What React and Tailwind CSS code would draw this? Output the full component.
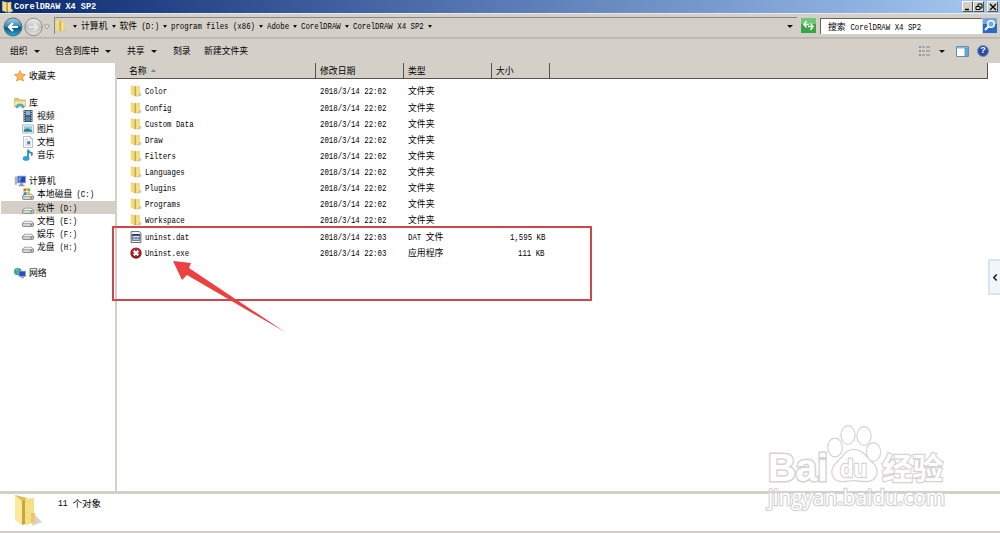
import { ChevronLeft } from 'lucide-react';

const CELL = 4.42;

const folders = ['Color', 'Config', 'Custom Data', 'Draw', 'Filters', 'Languages', 'Plugins', 'Programs', 'Workspace'];

const files = [
    ...folders.map((name) => ({ name, icon: 'folder', date: '2018/3/14 22:02', type: '文件夹', size: '' })),
    { name: 'uninst.dat', icon: 'dat', date: '2018/3/14 22:03', type: 'DAT 文件', size: '1,595 KB' },
    { name: 'Uninst.exe', icon: 'exe', date: '2018/3/14 22:03', type: '应用程序', size: '111 KB' },
];

const libraries = [
    { name: '视频', icon: 'video' },
    { name: '图片', icon: 'picture' },
    { name: '文档', icon: 'document' },
    { name: '音乐', icon: 'music' },
];

const drives = [
    { name: '本地磁盘 (C:)', icon: 'system' },
    { name: '软件 (D:)', icon: 'drive', active: true },
    { name: '文档 (E:)', icon: 'drive' },
    { name: '娱乐 (F:)', icon: 'drive' },
    { name: '龙盘 (H:)', icon: 'drive' },
];

const crumbs = ['计算机', '软件 (D:)', 'program files (x86)', 'Adobe', 'CorelDRAW', 'CorelDRAW X4 SP2'];

// latin runs sit on half-width cells, chinese glyphs on full-width ones
function Text({ children, cell = CELL }) {
    const runs = children.match(/[\x00-\x7f]+|[^\x00-\x7f]+/g) || [];
    return (
        <span className="flex h-[12px] items-center whitespace-pre leading-[12px]">
            {runs.map((run, i) =>
                run.charCodeAt(0) < 128 ? (
                    <span key={i} className="block h-[12px] leading-[14px]" style={{ width: run.length * cell }}>
                        <span
                            className="block w-max origin-left font-['Liberation_Mono',monospace] text-[9px]"
                            style={{ transform: `scaleX(${cell / 5.4})` }}
                        >
                            {run}
                        </span>
                    </span>
                ) : (
                    <span key={i} className="block h-[12px] font-['Noto_Sans_CJK_SC',sans-serif]" style={{ fontSize: cell * 2 }}>{run}</span>
                )
            )}
        </span>
    );
}

function Caret({ small }) {
    return (
        <svg className={small ? 'h-[3px] w-[4px]' : 'h-[3px] w-[6px]'} viewBox="0 0 6 3" preserveAspectRatio="none">
            <path d="M0 0h6L3 3z" fill="#111" />
        </svg>
    );
}

function Icon({ name, className = 'h-[12px] w-[12px]' }) {
    return (
        <svg className={`shrink-0 ${className}`} viewBox="0 0 16 16">
            {name === 'folder' && (
                <>
                    <path d="M11 10l4 1v3l-6 2z" fill="#ccc7b5" />
                    <path d="M1 0l6 2v13l-6-2z" fill="#f1dc80" />
                    <path d="M6 2l2-1v13l-2 2z" fill="#d0aa42" />
                    <path d="M8 2l5-1v12l-5 2z" fill="#ecd273" />
                    <path d="M9 3h2v10l-2 1z" fill="#f9eaa3" />
                </>
            )}
            {name === 'dat' && (
                <>
                    <path d="M1.5.8h11l2 2v12.5h-13z" fill="#fff" stroke="#5b6175" strokeWidth="1.3" />
                    <path d="M3 4.5h10v8H3z" fill="#dfe5f4" stroke="#303b62" />
                    <path d="M3 4h10v2.5H3z" fill="#303b62" />
                    <path d="M5 8v3m2-3v3m2-3v3m2-3v3" stroke="#303b62" />
                </>
            )}
            {name === 'exe' && (
                <>
                    <circle cx="8" cy="8" r="7.5" fill="#8c1921" />
                    <circle cx="8" cy="7" r="5.7" fill="#b52d36" />
                    <path d="M5 5l6 6m0-6l-6 6" stroke="#fff" strokeWidth="2.9" />
                </>
            )}
            {name === 'star' && (
                <path d="M8 .8l2.1 4.8 5.2.5-4 3.4 1.3 5.2L8 12l-4.6 2.7 1.3-5.2-4-3.4 5.2-.5z" fill="#fdbb4b" stroke="#d8893a" />
            )}
            {name === 'library' && (
                <>
                    <path d="M1 2h5l1 2h8v9H1z" fill="#e8ca68" stroke="#c5a353" />
                    <path d="M3 5h10v7H3z" fill="#b9dc8d" />
                    <path d="M1 6h14v5H1z" fill="#f8e9a4" />
                    <path d="M4 15v-1q0-4 4-4t4 4v1" fill="none" stroke="#58a7cf" strokeWidth="3" />
                </>
            )}
            {name === 'video' && (
                <>
                    <path d="M2 0h12v16H2z" fill="#424d5b" />
                    <path d="M5 1h6v6H5z" fill="#80b6dc" />
                    <path d="M5 9h6v6H5z" fill="#4b82b1" />
                    <path d="M3.5 1v14m9-14v14" stroke="#dce6ed" strokeWidth="1.2" strokeDasharray="1.5 1.5" />
                </>
            )}
            {name === 'picture' && (
                <>
                    <path d="M.7 2.5h14.6v11H.7z" fill="#f2f6f7" stroke="#9ba9ad" />
                    <path d="M2.5 4.5h11v7h-11z" fill="#8dcdea" />
                    <path d="M2.5 9l5-2 6 3v1.5h-11z" fill="#347e91" />
                </>
            )}
            {name === 'document' && (
                <>
                    <path d="M2 .7h9l3 3v11.6H2z" fill="#f8fafc" stroke="#a4adb5" />
                    <path d="M11 .7v3h3" fill="none" stroke="#a4adb5" />
                    <path d="M7 7h4v4H7z" fill="#437db5" />
                    <path d="M4 5h4M4 8h2m-2 4h8" stroke="#a9bed0" />
                </>
            )}
            {name === 'music' && (
                <>
                    <path d="M8 12V1q1 4 5 4 1 2-.5 4" fill="none" stroke="#238bce" strokeWidth="2.3" />
                    <ellipse cx="5.5" cy="12.5" rx="4.5" ry="3.3" fill="#349dda" />
                </>
            )}
            {name === 'computer' && (
                <>
                    <path d="M1 2h3v11H1z" fill="#a9b1c1" />
                    <path d="M4.5 1.5h11v9h-11z" fill="#2247c2" stroke="#a2adc5" />
                    <path d="M6 3h4l-2 6H6z" fill="#6f9df1" />
                    <path d="M8 11h4v2h2v2H6v-2h2z" fill="#9298a6" />
                </>
            )}
            {(name === 'drive' || name === 'system') && (
                <>
                    <path d="M0 11l3.5-3.5h9L16 11v3.5L14 16H2l-2-1.5z" fill="#8d918f" />
                    <path d="M1.5 10.5L4 8.5h8l2.5 2z" fill="#f0f1f0" />
                    <path d="M1.5 11.5h13v3h-13z" fill="#d8dad9" />
                    <path d="M11 13h2.5" stroke="#398746" strokeWidth="1.5" />
                </>
            )}
            {name === 'system' && (
                <>
                    <path d="M2 1l4-1v4L2 5z" fill="#dd6b3b" />
                    <path d="M7 0l4 1v4L7 4z" fill="#79b544" />
                    <path d="M2 6l4-1v4L2 10z" fill="#3e86c6" />
                    <path d="M7 5l4 1v4L7 9z" fill="#e3b53a" />
                </>
            )}
            {name === 'network' && (
                <>
                    <circle cx="5" cy="6" r="5" fill="#359bc8" />
                    <path d="M2 3q3-3 5-1L5 5 3 6zm1 5l4-2v4z" fill="#70c16c" />
                    <path d="M6.5 5.5h9v7h-9z" fill="#2550bd" stroke="#9aa7bf" />
                    <path d="M10 13h3v2H9z" fill="#8190a5" />
                </>
            )}
        </svg>
    );
}

function TitleBar() {
    return (
        <div className="flex h-[13px] shrink-0 items-center bg-linear-to-r from-[#0a2a70] via-[#5a79b5] to-[#a6c8f0]">
            <Icon name="folder" className="ml-px h-[12px] w-[13px]" />
            <div className="-mt-px font-bold text-white"><Text cell={5.14}>CorelDRAW X4 SP2</Text></div>
            <div className="mr-[2px] ml-auto flex">
                {['min', 'max', 'close'].map((button) => (
                    <button
                        key={button}
                        className={`flex h-[11px] w-[11px] items-center justify-center border border-t-white border-l-white border-r-[#555] border-b-[#555] bg-[#d4d0c8] ${button === 'close' ? 'ml-[3px]' : ''}`}
                    >
                        <svg className="h-[8px] w-[8px]" viewBox="0 0 8 8" fill="none" stroke="#000">
                            {button === 'min' && <path d="M1 6.5h4" strokeWidth="1.5" />}
                            {button === 'max' && <path d="M3 3V1h4v4H5M1 3.5h4v3H1z" />}
                            {button === 'close' && <path d="M1 1l6 6m0-6l-6 6" strokeWidth="1.3" />}
                        </svg>
                    </button>
                ))}
            </div>
        </div>
    );
}

function AddressBar() {
    return (
        <div className="flex h-[25px] shrink-0 items-center border-t border-b border-t-[#eceae6] border-b-[#b9b6b0] bg-[#d4d0c8]">
            <svg className="ml-[2px] h-[22px] w-[49px]" viewBox="0 0 49 22">
                <defs>
                    <linearGradient id="back" x2="0" y2="1">
                        <stop stopColor="#a7d2e4" />
                        <stop offset=".48" stopColor="#3684ae" />
                        <stop offset=".5" stopColor="#075080" />
                        <stop offset="1" stopColor="#26aeda" />
                    </linearGradient>
                    <linearGradient id="next" x2="0" y2="1">
                        <stop stopColor="#eeeeec" />
                        <stop offset=".5" stopColor="#c3c3c2" />
                        <stop offset="1" stopColor="#dededc" />
                    </linearGradient>
                </defs>
                <circle cx="11" cy="12" r="9" fill="url(#back)" stroke="#4c6f86" />
                <path d="M16 12H7m4-4l-4 4 4 4" fill="none" stroke="#fff" strokeWidth="2.2" />
                <circle cx="31.5" cy="12" r="8.7" fill="url(#next)" stroke="#8c8c8a" />
                <path d="M27 12h8m-3-3.5l3.5 3.5-3.5 3.5" fill="none" stroke="#e9e9e8" strokeWidth="2" />
                <path d="M42.5 10h5L45 14z" fill="#eee" stroke="#8f8f8f" strokeWidth=".8" />
            </svg>
            <div className="ml-[3px] flex h-[17px] w-[743px] items-center border-t border-l border-[#8b8780] pr-1">
                <Icon name="folder" />
                <span className="ml-[6px] flex"><Caret small /></span>
                {crumbs.map((crumb) => (
                    <div key={crumb} className="ml-[4px] flex items-center gap-[4px]">
                        <Text>{crumb}</Text>
                        <Caret small />
                    </div>
                ))}
                <span className="ml-auto"><Caret /></span>
            </div>
            <svg className="ml-[4px] h-[15px] w-[15px] bg-[#35a746]" viewBox="0 0 15 15">
                <path d="M0 0h15v6H0z" fill="#6dc775" />
                <path d="M5.5 3L3 6.500h5M9.500 12L12 8.500H7M3 6.500l2.500 3M12 8.500l-2.500-3" fill="none" stroke="#fff" strokeWidth="1.4" />
            </svg>
            <div className="ml-[4px] flex h-[16px] w-[162px] items-center border-t border-l border-[#65625e] bg-white pt-px pl-[7px]">
                <Text>搜索 CorelDRAW X4 SP2</Text>
            </div>
            <svg className="ml-[1px] h-[15px] w-[14px] bg-[#286bc5]" viewBox="0 0 14 15">
                <path d="M0 0h14v6H0z" fill="#73a7e0" />
                <circle cx="8" cy="6" r="3.3" fill="#77a7df" stroke="#fff" strokeWidth="1.5" />
                <path d="M5.5 8.5L2 12" stroke="#fff" strokeWidth="2" />
            </svg>
        </div>
    );
}

function Toolbar() {
    return (
        <div className="flex h-[25px] shrink-0 items-center border-t border-[#c2beb7] bg-[#d4d0c8] pr-[11px] pl-[10px]">
            <div className="flex w-[45px] items-center gap-[6px]"><Text>组织</Text><Caret /></div>
            <div className="flex w-[72px] items-center gap-[6px]"><Text>包含到库中</Text><Caret /></div>
            <div className="flex w-[46px] items-center gap-[6px]"><Text>共享</Text><Caret /></div>
            <div className="w-[31px]"><Text>刻录</Text></div>
            <Text>新建文件夹</Text>
            <svg className="ml-auto h-[10px] w-[11px]" viewBox="0 0 11 10">
                <path d="M0 1h2M0 5h2M0 9h2" stroke="#6c87a5" strokeWidth="1.5" />
                <path d="M3 1h3m1 0h4M3 5h3m1 0h4M3 9h3m1 0h4" stroke="#85847f" />
            </svg>
            <span className="ml-[9px]"><Caret /></span>
            <svg className="ml-[11px] h-[11px] w-[13px]" viewBox="0 0 13 11">
                <path d="M.5.5h12v10H.5z" fill="#fff" stroke="#688eaa" />
                <path d="M1 1h11v1.5H1z" fill="#8db8d2" />
                <path d="M8.5 2h3.5v8H8.5z" fill="#5ba7d0" />
            </svg>
            <span className="ml-[8px] flex h-[12px] w-[12px] items-center justify-center rounded-full border border-[#8190bb] bg-[#294ba4] font-['Liberation_Sans',sans-serif] text-[9px] font-bold text-white">?</span>
        </div>
    );
}

function Sidebar() {
    return (
        <aside className="w-[117px] shrink-0 border-r-2 border-[#d4d0c8] pt-[6px]">
            <div className="flex h-[14px] items-center gap-[3px] pl-[14px]"><Icon name="star" /><Text>收藏夹</Text></div>
            <div className="mt-[13px] flex h-[13px] items-center gap-[3px] pl-[14px]"><Icon name="library" /><Text>库</Text></div>
            {libraries.map((item) => (
                <div key={item.name} className="flex h-[13.2px] items-center gap-[3px] pl-[22px]">
                    <Icon name={item.icon} /><Text>{item.name}</Text>
                </div>
            ))}
            <div className="mt-[13px] flex h-[13px] items-center gap-[3px] pl-[14px]"><Icon name="computer" /><Text>计算机</Text></div>
            {drives.map((item) => (
                <div key={item.name} className={`ml-px flex h-[13.2px] items-center gap-[3px] pl-[21px] ${item.active ? 'bg-[#d4d0c8]' : ''}`}>
                    <Icon name={item.icon} /><Text>{item.name}</Text>
                </div>
            ))}
            <div className="mt-[13px] flex h-[13px] items-center gap-[3px] pl-[14px]"><Icon name="network" /><Text>网络</Text></div>
        </aside>
    );
}

function FileList() {
    return (
        <main className="min-w-0 flex-1">
            <div className="mr-[12px] flex h-[16px] border-r border-b border-[#55534f] bg-[#d4d0c8] *:flex *:items-center *:border-r *:border-[#55534f]">
                <div className="w-[199px] gap-[4px] pl-[12px]">
                    <Text>名称</Text>
                    <svg className="h-[3px] w-[5px]" viewBox="0 0 5 3"><path d="M0 3h5L2.5 0z" fill="#88857f" /></svg>
                </div>
                <div className="w-[88px] pl-[4px]"><Text>修改日期</Text></div>
                <div className="w-[88px] pl-[4px]"><Text>类型</Text></div>
                <div className="w-[58px] pl-[4px]"><Text>大小</Text></div>
            </div>
            <div className="pt-[4.3px]">
                {files.map((file) => (
                    <div key={file.name} className="flex h-[16.15px] items-center pl-[13px]">
                        <div className="flex w-[190px] items-center gap-[3px]">
                            <Icon name={file.icon} /><Text>{file.name}</Text>
                        </div>
                        <div className="w-[88px]"><Text>{file.date}</Text></div>
                        <div className="w-[88px]"><Text>{file.type}</Text></div>
                        <div className="flex w-[49px] justify-end"><Text>{file.size}</Text></div>
                    </div>
                ))}
            </div>
        </main>
    );
}

function Watermark() {
    return (
        <svg
            className="absolute top-[420px] left-[760px] h-[95px] w-[195px] [paint-order:stroke]"
            viewBox="0 0 195 95"
            fill="#fff"
            stroke="#d5d3d3"
            strokeWidth="2.4"
        >
            <ellipse cx="75" cy="27.5" rx="6.7" ry="8.7" />
            <ellipse cx="88" cy="15" rx="6.5" ry="8.7" />
            <ellipse cx="104" cy="16" rx="6.5" ry="8.7" />
            <ellipse cx="113.5" cy="32" rx="6.5" ry="8.7" />
            <path d="M94 30c-9 0-11 8-17 13-8 7-5 18 5 18 5 0 8-1 12-1s7 1 12 1c11 0 14-11 6-18-6-5-9-13-18-13z" />
            <g className="font-['Liberation_Sans',sans-serif] font-bold">
                <text x="8" y="60.5" fontSize="39" textLength="60" lengthAdjust="spacingAndGlyphs" strokeWidth="3">Bai</text>
                <text x="80" y="57" fontSize="24" textLength="27" lengthAdjust="spacingAndGlyphs">du</text>
            </g>
            <text x="122" y="59" fontSize="30" textLength="61" lengthAdjust="spacingAndGlyphs" className="font-['Noto_Sans_CJK_SC',sans-serif] font-bold">经验</text>
            <text x="8" y="84.5" fontSize="21" textLength="177" lengthAdjust="spacingAndGlyphs" className="font-['Open_Sans',sans-serif]">jingyan.baidu.com</text>
        </svg>
    );
}

function App() {
    return (
        <div className="relative flex h-[533px] w-[1000px] flex-col overflow-hidden bg-white text-black">
            <TitleBar />
            <AddressBar />
            <Toolbar />
            <div className="flex min-h-0 flex-1">
                <Sidebar />
                <FileList />
            </div>
            <footer className="flex h-[42px] shrink-0 border-t-[3px] border-b-2 border-t-[#d4d0c8] border-b-[#d4d0c8] pl-[13px]">
                <svg className="h-[34px] w-[30px]" viewBox="0 0 30 34">
                    <path d="M20 19l9 9-10 4z" fill="#d5d4d0" />
                    <path d="M2 1l12 3v26H7z" fill="#e0bc55" />
                    <path d="M12 5l9-1v25l-9 2z" fill="#f5df85" />
                    <path d="M2 1l7 6v24l-7-5z" fill="#f8e99c" />
                    <path d="M9 7l3-1v24l-3 1z" fill="#c9a441" />
                    <path d="M18 19h4v9l-4 1z" fill="#eaca61" />
                </svg>
                <div className="mt-[3px] ml-[15px]"><Text cell={4.8}>11 个对象</Text></div>
            </footer>
            <div className="absolute top-[226px] left-[112px] h-[75px] w-[480px] border-2 border-[#cf474b]" />
            <svg className="absolute top-[258px] left-[170px] h-[78px] w-[118px]" viewBox="0 0 118 78">
                <path d="M3 3l18 2-2 5 96 64-98-57-5 5z" fill="#ea4141" />
            </svg>
            <button className="absolute top-[259px] left-[988px] flex h-[36px] w-[12px] items-center justify-center border-2 border-r-0 border-[#dae4ec] bg-[#f2f6fb]">
                <ChevronLeft size={11} strokeWidth={4} color="#222" />
            </button>
            <Watermark />
        </div>
    );
}

export default App;
